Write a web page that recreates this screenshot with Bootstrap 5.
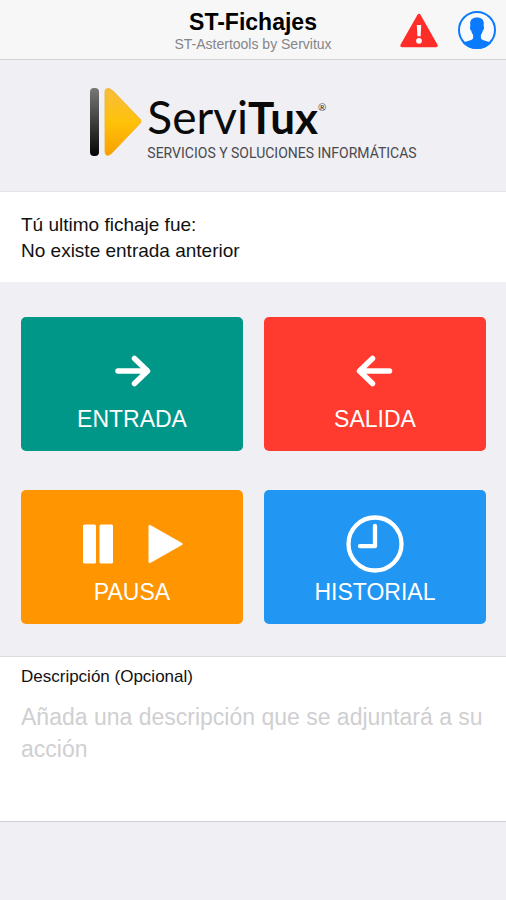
<!DOCTYPE html>
<html lang="es">
<head>
<meta charset="utf-8">
<meta name="viewport" content="width=device-width, initial-scale=1">
<title>ST-Fichajes</title>
<link href="https://cdn.jsdelivr.net/npm/bootstrap@5.3.0/dist/css/bootstrap.min.css" rel="stylesheet">
<style>
body { background: #efeff4; color: #111; font-family: "Liberation Sans", Arial, sans-serif; }
.app-bar { background: #f7f7f8; border-bottom: 1px solid #d0d0d3; padding: 8px 9px 7px; }
.app-title { font-size: 23px; line-height: 29px; font-weight: 700; color: #000; }
.app-sub { font-size: 14px; line-height: 15px; color: #858588; }
.app-tools { gap: 18px; }
.icon-btn { line-height: 0; }
.brand-area { padding: 27px 20px 32px; }
.brand-name { font-family: Lato, sans-serif; font-size: 46px; line-height: 60px; font-weight: 400; color: #0a0a0a; }
.brand-name b { font-weight: 700; font-size: 44px; }
.brand-reg { font-size: 10px; line-height: 40px; color: #333; }
.brand-line { font-family: Roboto, sans-serif; font-size: 14px; line-height: 12px; color: #4a4a4e; }
.last-entry { border-top: 1px solid #e4e4e7; padding: 20px 21px 18px; font-size: 19px; line-height: 26px; }
.actions { padding: 35px 20px 32px 21px; }
.actions .row { --bs-gutter-x: 21px; --bs-gutter-y: 39px; }
.action { border: 0; border-radius: 5px; color: #fff; padding: 22px 8px 16px; font-size: 23px; line-height: 32px; }
.action svg { height: 64px; }
.in { background: #009688; }
.out { background: #ff3b30; }
.pause { background: #ff9500; }
.history { background: #2196f3; }
.note { border-top: 1px solid #dcdcdf; border-bottom: 1px solid #d0d0d3; padding: 8px 20px 8px 21px; }
.note label { font-size: 17px; line-height: 24px; }
.note textarea { font-size: 23px; line-height: 32px; min-height: 112px; resize: none; margin-top: 12px; color: #111; }
.note textarea::placeholder { color: #cfcfd1; opacity: 1; }
</style>
<script src="https://cdn.jsdelivr.net/npm/bootstrap@5.3.0/dist/js/bootstrap.bundle.min.js"></script>
</head>
<body>
<header class="app-bar d-flex align-items-center">
  <div class="flex-fill w-25"></div>
  <div class="text-center text-nowrap">
    <h1 class="app-title m-0">ST-Fichajes</h1>
    <div class="app-sub">ST-Astertools by Servitux</div>
  </div>
  <div class="app-tools flex-fill w-25 d-flex justify-content-end align-items-center">
    <button type="button" class="icon-btn btn p-0 border-0" aria-label="Avisos">
      <svg width="40" height="38" viewBox="0 0 40 38"><path d="M20 4.500 37 34.500H3Z" fill="#ff2d27" stroke="#ff2d27" stroke-width="3.500" stroke-linejoin="round"/><path d="M17.800 14h4.400l-.6 11.200h-3.200Z" fill="#fff"/><circle cx="20" cy="29.800" r="2.900" fill="#fff"/></svg>
    </button>
    <button type="button" class="icon-btn btn p-0 border-0" aria-label="Perfil">
      <svg width="40" height="40" viewBox="0 0 40 40"><circle cx="20" cy="20" r="18" fill="#f9fafc" stroke="#0a7aff" stroke-width="2"/><path d="M20 7.400c-4.600 0-7 2.400-6.800 6.400l.2 2.400c-.8.300-.5 3.700.9 4.600.4 2 1 3 1.800 4v3.400c-.7 2.600-7 2.600-10.600 4.600A18.500 18.500 0 0 0 20 38.800a18.500 18.500 0 0 0 14.500-6c-3.600-2-9.900-2-10.600-4.600v-3.400c.8-1 1.400-2 1.800-4 1.400-.9 1.700-4.300.9-4.600l.2-2.400c.2-4-2.200-6.400-6.800-6.400Z" fill="#0a7aff"/></svg>
    </button>
  </div>
</header>

<main>
  <section class="brand-area d-flex justify-content-center" aria-label="ServiTux">
    <svg class="me-1" width="54" height="70" viewBox="0 0 54 70" aria-hidden="true">
      <defs>
        <linearGradient id="bar" x2="0" y2="1"><stop stop-color="#777"/><stop offset=".45" stop-color="#444"/><stop offset="1" stop-color="#050505"/></linearGradient>
        <linearGradient id="tri" x2="0" y2="1"><stop stop-color="#f7bd3c"/><stop offset=".5" stop-color="#ffc20a"/><stop offset="1" stop-color="#f7a000"/></linearGradient>
      </defs>
      <rect x="1" y="1" width="9" height="68" rx="4" fill="url(#bar)"/>
      <path d="M16 5Q16 1 20 1.500L24 4 51 32q2 2 0 4.500L22 67q-6 4-6-3Z" fill="url(#tri)" stroke="#f2ae20" stroke-width=".8"/>
    </svg>
    <div class="text-nowrap">
      <div class="brand-name d-flex"><span>Servi<b>Tux</b></span><span class="brand-reg">®</span></div>
      <div class="brand-line">SERVICIOS Y SOLUCIONES INFORMÁTICAS</div>
    </div>
  </section>

  <section class="last-entry bg-white">
    <p class="m-0">Tú ultimo fichaje fue:</p>
    <p class="m-0">No existe entrada anterior</p>
  </section>

  <section class="actions">
    <div class="row row-cols-2">
      <div class="col"><button type="button" class="action in w-100 d-flex flex-column align-items-center">
        <svg width="64" viewBox="0 0 64 64"><path d="M18 32H47M34.500 19.500 47.500 32 34.500 44.500" fill="none" stroke="#fff" stroke-width="5.500" stroke-linecap="round" stroke-linejoin="round"/></svg>
        <span>ENTRADA</span></button></div>
      <div class="col"><button type="button" class="action out w-100 d-flex flex-column align-items-center">
        <svg width="64" viewBox="0 0 64 64"><path d="M46.500 32H18M29.500 19.500 16.500 32 29.500 44.500" fill="none" stroke="#fff" stroke-width="5.500" stroke-linecap="round" stroke-linejoin="round"/></svg>
        <span>SALIDA</span></button></div>
      <div class="col"><button type="button" class="action pause w-100 d-flex flex-column align-items-center">
        <svg width="104" viewBox="0 0 104 64"><g fill="#fff"><rect x="3" y="12.500" width="13" height="39" rx="1.500"/><rect x="19.500" y="12.500" width="13.500" height="39" rx="1.500"/><path d="M68.500 14.500q0-2.500 2.200-1.200L102 31q1.600 1 0 2L70.700 50.800q-2.200 1.200-2.200-1.300Z"/></g></svg>
        <span>PAUSA</span></button></div>
      <div class="col"><button type="button" class="action history w-100 d-flex flex-column align-items-center">
        <svg width="64" viewBox="0 0 64 64"><g fill="none" stroke="#fff" stroke-width="4.300"><circle cx="32" cy="32" r="26.500"/><path d="M32 14V34.200H17" stroke-linecap="round" stroke-linejoin="round"/></g></svg>
        <span>HISTORIAL</span></button></div>
    </div>
  </section>

  <section class="note bg-white">
    <label for="desc" class="d-block">Descripción (Opcional)</label>
    <textarea id="desc" class="form-control border-0 rounded-0 shadow-none bg-transparent p-0" placeholder="Añada una descripción que se adjuntará a su acción"></textarea>
  </section>
</main>
</body>
</html>
